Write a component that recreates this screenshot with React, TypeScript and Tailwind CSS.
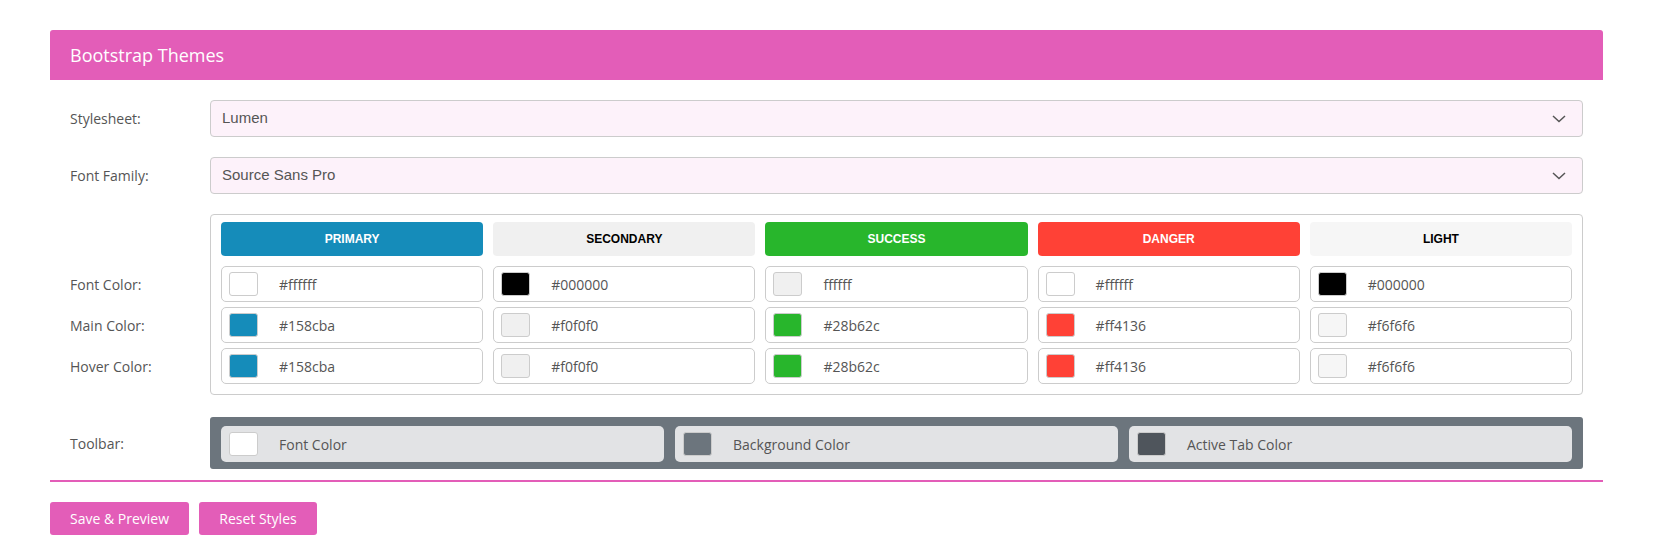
import React from "react";

const columns = [
  { name: "PRIMARY", bg: "bg-[#158cba]", text: "text-white", rows: [["#ffffff", "bg-white"], ["#158cba", "bg-[#158cba]"], ["#158cba", "bg-[#158cba]"]] },
  { name: "SECONDARY", bg: "bg-[#f0f0f0]", text: "text-black", rows: [["#000000", "bg-black"], ["#f0f0f0", "bg-[#f0f0f0]"], ["#f0f0f0", "bg-[#f0f0f0]"]] },
  { name: "SUCCESS", bg: "bg-[#28b62c]", text: "text-white", rows: [["ffffff", "bg-[#f0f0f0]"], ["#28b62c", "bg-[#28b62c]"], ["#28b62c", "bg-[#28b62c]"]] },
  { name: "DANGER", bg: "bg-[#ff4136]", text: "text-white", rows: [["#ffffff", "bg-white"], ["#ff4136", "bg-[#ff4136]"], ["#ff4136", "bg-[#ff4136]"]] },
  { name: "LIGHT", bg: "bg-[#f6f6f6]", text: "text-black", rows: [["#000000", "bg-black"], ["#f6f6f6", "bg-[#f6f6f6]"], ["#f6f6f6", "bg-[#f6f6f6]"]] },
];

const toolbar = [
  ["Font Color", "bg-white"],
  ["Background Color", "bg-[#6c757d]"],
  ["Active Tab Color", "bg-[#4f555c]"],
];

const Chevron = () => (
  <svg width="14" height="8" viewBox="0 0 14 8" className="shrink-0">
    <polyline points="1,1 7,6.5 13,1" fill="none" stroke="#555" strokeWidth="1.5" />
  </svg>
);

const SelectBox = ({ value }: { value: string }) => (
  <div className="flex-1 h-[37px] bg-[#fdf2fa] border border-[#cccccc] rounded flex items-center justify-between pl-[11px] pr-[16px] text-[15px] text-[#555] font-['Liberation_Sans',sans-serif]">
    <span>{value}</span>
    <Chevron />
  </div>
);

const Swatch = ({ color }: { color: string }) => (
  <div className={`w-[29px] h-6 rounded-[3px] border border-[#cccccc] shrink-0 ${color}`} />
);

export default function App() {
  return (
    <div className="w-[1653px] h-[555px] bg-white font-['Open_Sans',sans-serif] text-[#555] pt-[30px]">
      <div className="mx-[50px]">
        <div className="h-[50px] bg-[#e35db8] rounded-t-[3px] flex items-center px-5 text-white text-[18px]">
          Bootstrap Themes
        </div>
        <div className="px-5 pt-5 pb-[11px] flex flex-col gap-5 border-b-2 border-[#e35db8]">
          <div className="flex items-center">
            <div className="w-[140px] text-[14px]">Stylesheet:</div>
            <SelectBox value="Lumen" />
          </div>
          <div className="flex items-center">
            <div className="w-[140px] text-[14px]">Font Family:</div>
            <SelectBox value="Source Sans Pro" />
          </div>
          <div className="flex">
            <div className="w-[140px] text-[14px] pt-[52px] flex flex-col gap-[5px]">
              <div className="h-9 flex items-center">Font Color:</div>
              <div className="h-9 flex items-center">Main Color:</div>
              <div className="h-9 flex items-center">Hover Color:</div>
            </div>
            <div className="flex-1 border border-[#cccccc] rounded pt-[7px] px-2.5 pb-2.5 grid grid-cols-5 gap-x-2.5">
              {columns.map((c) => (
                <div key={c.name} className="flex flex-col">
                  <div className={`h-[34px] rounded-[4px] flex items-center justify-center font-['Liberation_Sans',sans-serif] font-bold text-[12px] ${c.bg} ${c.text}`}>
                    {c.name}
                  </div>
                  <div className="mt-2.5 flex flex-col gap-[5px]">
                    {c.rows.map(([val, sw], i) => (
                      <div key={i} className="h-9 border border-[#cccccc] rounded-[5px] flex items-center px-[7px] text-[14px]">
                        <Swatch color={sw} />
                        <span className="ml-[21px]">{val}</span>
                      </div>
                    ))}
                  </div>
                </div>
              ))}
            </div>
          </div>
          <div className="flex items-center mt-0.5">
            <div className="w-[140px] text-[14px]">Toolbar:</div>
            <div className="flex-1 bg-[#6c757d] rounded-[3px] px-[11px] pt-[9px] pb-[7px] grid grid-cols-3 gap-x-[11px]">
              {toolbar.map(([label, sw]) => (
                <div key={label} className="h-9 bg-[#e2e3e5] rounded-[5px] flex items-center px-2 text-[14px]">
                  <Swatch color={sw} />
                  <span className="ml-[21px]">{label}</span>
                </div>
              ))}
            </div>
          </div>
        </div>
        <div className="flex gap-2.5 mt-5">
          <button className="h-[33px] w-[139px] bg-[#e35db8] text-white text-[14px] font-medium rounded-[3px]">Save &amp; Preview</button>
          <button className="h-[33px] w-[118px] bg-[#e35db8] text-white text-[14px] font-medium rounded-[3px]">Reset Styles</button>
        </div>
      </div>
    </div>
  );
}
